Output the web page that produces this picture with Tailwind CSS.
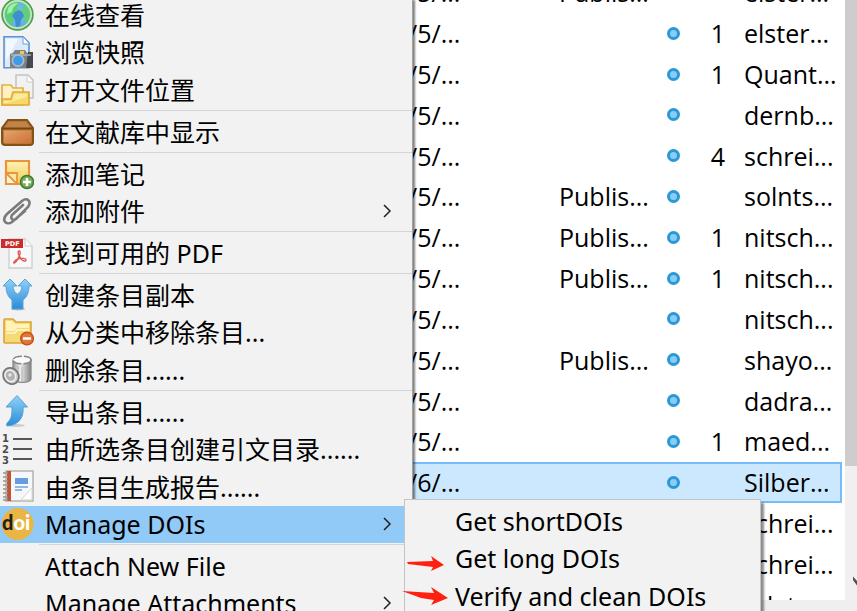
<!DOCTYPE html>
<html lang="zh-CN">
<head>
<meta charset="utf-8">
<meta name="viewport" content="width=device-width, initial-scale=1">
<title>Zotero</title>
<script src="https://cdn.jsdelivr.net/npm/@tailwindcss/browser@4"></script>
</head>
<body class="relative h-screen overflow-hidden bg-white font-['Open_Sans','Noto_Sans_CJK_SC',sans-serif] text-[25px] leading-8 text-black">

<!-- Item list -->
<main class="flex h-full flex-col">
  <div class="flex min-h-0 flex-1">
    <div class="min-w-0 flex-1 overflow-hidden pr-[3px]">
      <table class="-mt-[28px] h-[653px] w-full table-fixed border-collapse whitespace-nowrap" aria-label="Items">
        <colgroup><col class="w-[551px]"><col class="w-[103px]"><col class="w-[38px]"><col class="w-[44px]"><col></colgroup>
        <tbody id="items"></tbody>
      </table>
    </div>
    <div class="flex w-3 flex-col bg-[#f0f0f0]" aria-hidden="true">
      <div class="h-[466px] bg-[#cdcdcd]"></div>
      <svg class="mt-[109px] ml-auto h-3 w-1" viewBox="0 0 4 12"><path d="M0 1.5 4 6v4.5L0 5z" fill="#505050"/></svg>
    </div>
  </div>
  <footer class="h-[11px] bg-[#efefef]"></footer>
</main>

<!-- Context menu -->
<nav id="menu" aria-label="Item actions" class="absolute top-0 left-0 h-full w-[413px] overflow-hidden border-r border-[#a0a0a0] bg-[#f2f2f2] font-['Noto_Sans','Noto_Sans_CJK_SC',sans-serif] shadow-[2px_0_2px_rgba(0,0,0,0.5)]">
  <div class="-mt-1">
    <div class="grid h-[113px] auto-rows-fr">
      <button class="flex w-full items-center text-left">
        <svg class="mr-[11px] ml-px size-[33px] shrink-0" viewBox="0 0 33 33"><defs><radialGradient id="gl" cx=".5" cy=".45" r=".6"><stop offset="0" stop-color="#7cc4ee"/><stop offset="1" stop-color="#5aa5dd"/></radialGradient></defs><circle cx="16.500" cy="16.500" r="15.300" fill="url(#gl)" stroke="#4e9f4a" stroke-width="1.800"/><path d="M5 10C8 4 14 3 18 4l-2 5 2 3-4 3-3 3 2 4-2 5C5 24 3 17 5 10z" fill="#58cf74"/><path d="M20 4c7 2 10 8 9 15l-4 6-3-3 1-5-5-2 1-3 5-2z" fill="#5fcf7c"/><path d="M18 12l3 2 2 4-3 4-1 6-4 1-1-7-3-4 3-4z" fill="#3f8ed0"/><path d="M7 10c3-4 6-5 10-5l-5 5-1 4-5 2z" fill="#a2ecae"/><circle cx="16.500" cy="16.500" r="13.600" fill="none" stroke="#c5e8b4" stroke-width="1.800"/></svg>在线查看</button>
      <button class="flex w-full items-center text-left">
        <svg class="mr-[11px] ml-px size-[33px] shrink-0" viewBox="0 0 33 33"><path d="M3 .8h19l6 6v25H3z" fill="#dceafc" stroke="#5a92d4" stroke-width="1.600"/><path d="M5 3h12L5 25z" fill="#fff" opacity=".65"/><path d="M22 1v7h6" fill="#fff" stroke="#6f9fd9"/><path d="M9 18l3-1 2-3h10l2 3h5v15H9z" fill="#7b8287"/><path d="M27 16h5v16h-7z" fill="#464a4f"/><path d="M19 15h4v3h-4z" fill="#f5c84d"/><path d="M10 19h20" stroke="#aab2b8" stroke-width="1.500"/><circle cx="17" cy="24.500" r="6.500" fill="#b0bcc5"/><circle cx="17" cy="24.500" r="4.800" fill="#3d9cea"/></svg>浏览快照</button>
      <button class="flex w-full items-center text-left">
        <svg class="mr-[11px] ml-px size-[33px] shrink-0" viewBox="0 0 33 33"><path d="M15 1h12l5 5v18H15z" fill="#f2f2f2" stroke="#c2c2c2" stroke-width="1.500"/><path d="M26 1v7h6" fill="#fff" stroke="#ccc"/><path d="M1 11h9l2 3h10v17H1z" fill="#fff0c0" stroke="#e0b04a" stroke-width="1.700"/><path d="M12 18h16v13H1v-6h9z" fill="#f6d968" stroke="#e0ab3c" stroke-width="1.700"/><path d="M13 20h13v3L6 29H3v-2h8z" fill="#fff6bd" opacity=".6"/></svg>打开文件位置</button>
    </div>
    <hr class="mt-px mb-[2px] ml-[39px] border-[#d5d5d5]">
    <div class="grid h-[38px] auto-rows-fr">
      <button class="flex w-full items-center text-left">
        <svg class="mr-[11px] ml-px size-[33px] shrink-0" viewBox="0 0 33 33"><defs><linearGradient id="bx" x2="1" y2="1"><stop stop-color="#e5a468"/><stop offset="1" stop-color="#cc7038"/></linearGradient></defs><path d="M7 4h19l6 8v14q0 3-3 3H4q-3 0-3-3V12z" fill="#b87838" stroke="#845116" stroke-width="2"/><path d="M8 6h17l4 6H4z" fill="#c08348"/><path d="M2 12.500h29" stroke="#76460f" stroke-width="2"/><path d="M3 14.500h27V27H3z" fill="url(#bx)"/></svg>在文献库中显示</button>
    </div>
    <hr class="mt-px mb-[2px] ml-[39px] border-[#d5d5d5]">
    <div class="grid h-[75px] auto-rows-fr">
      <button class="flex w-full items-center text-left">
        <svg class="mr-[11px] ml-px size-[33px] shrink-0" viewBox="0 0 33 33"><defs><linearGradient id="nt" y2="1" x2="0"><stop stop-color="#fff1b5"/><stop offset="1" stop-color="#f0cc50"/></linearGradient></defs><path d="M5 4h23v23H5z" fill="url(#nt)" stroke="#e8953c" stroke-width="2.200"/><path d="M5 16h11v11H5z" fill="#fbe4a5" stroke="#e8953c" stroke-width="1.800"/><path d="M6 17l9 9H6z" fill="#fff6dc"/><path d="M5 16l11 11" stroke="#e8953c" stroke-width="1.800"/><circle cx="26" cy="25" r="6.500" fill="#76ad56" stroke="#457a33" stroke-width="1.500"/><path d="M26 21v8m-4-4h8" stroke="#fff" stroke-width="2.500"/></svg>添加笔记</button>
      <button class="flex w-full items-center text-left">
        <svg class="mr-[11px] ml-px size-[33px] shrink-0" viewBox="0 0 33 33" fill="none" stroke-linecap="round"><path d="M22 10 11 20c-2 4 1 6 4 4L27 12c4-6-1-10-6-6L6 19c-6 6-1 12 5 8l13-11" stroke="#7a7a7a" stroke-width="2.600"/></svg>添加附件<svg class="mr-[19px] ml-auto h-4 w-3 shrink-0" viewBox="0 0 12 16"><path d="m3 2 6 6-6 6" fill="none" stroke="#222" stroke-width="1.500"/></svg></button>
    </div>
    <hr class="mt-px mb-[2px] ml-[39px] border-[#d5d5d5]">
    <div class="grid h-[38px] auto-rows-fr">
      <button class="flex w-full items-center text-left">
        <svg class="mr-[11px] ml-px size-[33px] shrink-0" viewBox="0 0 33 33"><path d="M8 2h16l7 7v22H8z" fill="#f9f9f9" stroke="#cdcdcd" stroke-width="1.300"/><path d="M24 2v7h7" fill="#fff" stroke="#ccc"/><path d="M0 2h22v9H0z" fill="#cb2e2a"/><text x="4" y="9" font-family="DejaVu Sans" font-size="6.500" font-weight="700" fill="#fff">PDF</text><path d="M18 14c-2 1 0 5 2 8 2 2 5 3 5 1s-5-2-8-1c-3 1-5 4-4 4 2 0 5-6 6-9 .500-2 0-3-1-3z" fill="none" stroke="#dc5a55" stroke-width="1.400"/></svg>找到可用的 PDF</button>
    </div>
    <hr class="mt-px mb-[2px] ml-[39px] border-[#d5d5d5]">
    <div class="grid h-[113px] auto-rows-fr">
      <button class="flex w-full items-center text-left">
        <svg class="mr-[11px] ml-px size-[33px] shrink-0" viewBox="0 0 33 33"><defs><linearGradient id="bl" x2="0" y2="1"><stop stop-color="#8fd2f8"/><stop offset="1" stop-color="#2b8cd8"/></linearGradient></defs><ellipse cx="17" cy="31" rx="7" ry="1.500" fill="#bbb"/><path d="M9 1l7 7h-4c0 4 2 7 4.500 8C19 15 21 12 21 8h-4l7-7 7 7h-3c0 6-2 11-6 14v9H11v-9C7 19 5 14 5 8H2z" fill="url(#bl)" stroke="#56a5da" stroke-width="1"/></svg>创建条目副本</button>
      <button class="flex w-full items-center text-left">
        <svg class="mr-[11px] ml-px size-[33px] shrink-0" viewBox="0 0 33 33"><path d="M3 4q0-1 1-1h8l3 3h15v20q0 1-1 1H4q-1 0-1-1z" fill="#f6da78" stroke="#dba432" stroke-width="1.600"/><path d="M5 5h6l3 3h14v4H16l-3 3H5z" fill="#fff3b9"/><path d="M5 17h9l2-3h12" fill="none" stroke="#fff7ca" stroke-width="1.500"/><circle cx="26" cy="22.500" r="6.300" fill="#e2763a" stroke="#c2531c" stroke-width="1.500"/><path d="M22 22.500h8" stroke="#fff" stroke-width="2.500"/></svg>从分类中移除条目...</button>
      <button class="flex w-full items-center text-left">
        <svg class="mr-[11px] ml-px size-[33px] shrink-0" viewBox="0 0 33 33"><defs><linearGradient id="tr"><stop stop-color="#999"/><stop offset=".4" stop-color="#f0f0f0"/><stop offset="1" stop-color="#808080"/></linearGradient></defs><path d="M12 6v19c2 4 16 5 18 0V6z" fill="url(#tr)" stroke="#888" stroke-width="1.300"/><path d="M17 12v14m4-13v15m4-15v14" stroke="#b5b5b5"/><ellipse cx="21" cy="6" rx="9" ry="3.800" fill="#fafafa" stroke="#858585" stroke-width="1.600" stroke-dasharray="9 2"/><ellipse cx="10" cy="22" rx="7.500" ry="8.500" fill="#d0d0d0" stroke="#777" stroke-width="1.800" transform="rotate(-35 10 22)"/><ellipse cx="9.500" cy="21.500" rx="5" ry="5.800" fill="#b0b0b0" stroke="#f2f2f2" stroke-width="1.300" transform="rotate(-35 10 22)"/><circle cx="9" cy="21" r="1.800" fill="#e5e5e5"/></svg>删除条目......</button>
    </div>
    <hr class="mt-px mb-[2px] ml-[39px] border-[#d5d5d5]">
    <div class="grid h-[150px] auto-rows-fr">
      <button class="flex w-full items-center text-left">
        <svg class="mr-[11px] ml-px size-[33px] shrink-0" viewBox="0 0 33 33"><ellipse cx="15" cy="30.500" rx="9" ry="1.500" fill="#ccc"/><path d="M16 .5 26.500 12H22c1 9-3 18-16 19-1-2 0-3 1-4 4-4 4-8 4-15H5z" fill="url(#bl)" stroke="#56a0d8" stroke-width="1"/></svg>导出条目......</button>
      <button class="flex w-full items-center text-left">
        <svg class="mr-[11px] ml-px size-[33px] shrink-0" viewBox="0 0 33 33"><path d="M12 6h19M12 16h19M12 26h19" stroke="#555" stroke-width="2"/><g font-family="DejaVu Sans" font-size="10" font-weight="700" fill="#4a4a4a"><text x="1" y="9">1</text><text x="1" y="20">2</text><text x="1" y="31">3</text></g></svg>由所选条目创建引文目录......</button>
      <button class="flex w-full items-center text-left">
        <svg class="mr-[11px] ml-px size-[33px] shrink-0" viewBox="0 0 33 33"><path d="M5 1h27v30H5z" fill="#f5f7fa" stroke="#b3b3b3" stroke-width="1.500"/><path d="M6 1h4v30H6z" fill="#c2552f"/><path d="M2 3h5M2 7h5M2 11h5M2 15h5M2 19h5M2 23h5M2 27h5M2 30h5" stroke="#969696" stroke-width="1.500"/><path d="M14 8h13v6H14z" fill="#669ce0"/><path d="M14 17h13M14 20h7" stroke="#73a1dd" stroke-width="1.700"/><path d="M20 30 31 18v12z" fill="#fff" stroke="#d5d5d5"/></svg>由条目生成报告......</button>
      <button class="flex w-full items-center bg-[#91c9f7] text-left" aria-haspopup="menu" aria-expanded="true">
        <svg class="mr-[11px] ml-px size-[33px] shrink-0" viewBox="0 0 33 33"><circle cx="16.500" cy="16" r="16" fill="#ebb544"/><text x="1" y="21.500" font-family="Lato" font-size="20" font-weight="900" fill="#231f20">d<tspan fill="#fff">oi</tspan></text></svg>Manage DOIs<svg class="mr-[19px] ml-auto h-4 w-3 shrink-0" viewBox="0 0 12 16"><path d="m3 2 6 6-6 6" fill="none" stroke="#222" stroke-width="1.500"/></svg></button>
    </div>
    <hr class="mt-px mb-[2px] ml-[39px] border-[#d5d5d5]">
    <div class="grid h-[75px] auto-rows-fr">
      <button class="flex w-full items-center pl-[45px] text-left">Attach New File</button>
      <button class="flex w-full items-center pl-[45px] text-left">Manage Attachments<svg class="mr-[19px] ml-auto h-4 w-3 shrink-0" viewBox="0 0 12 16"><path d="m3 2 6 6-6 6" fill="none" stroke="#222" stroke-width="1.500"/></svg></button>
    </div>
  </div>
</nav>

<!-- Manage DOIs submenu -->
<nav aria-label="Manage DOIs" class="absolute top-[499px] left-[404px] w-[357px] border border-[#c4c4c4] bg-[#f2f2f2] pt-[2px] font-['Noto_Sans',sans-serif] shadow-[3px_4px_2px_rgba(0,0,0,0.45)]">
  <div class="grid h-[113px] auto-rows-fr">
    <button class="flex items-center pl-[50px] text-left">Get shortDOIs</button>
    <button class="flex items-center pl-[50px] text-left">Get long DOIs</button>
    <button class="flex items-center pl-[50px] text-left">Verify and clean DOIs</button>
  </div>
</nav>

<!-- Annotation arrows -->
<svg class="pointer-events-none absolute top-[555px] left-[402px] h-[52px] w-[48px]" viewBox="0 0 48 52" fill="#ff2010" aria-hidden="true">
  <path d="M5 7 31 6 29 1 42 10 29 16 31 12 6 9z"/>
  <path d="M0 36 32 38 29 32 46 43 29 50 32 45 19 43z"/>
</svg>

<script>
const rows = [
  ['/5/...', 'Publis...', '', 'elster...'],
  ['/5/...', '', '1', 'elster...'],
  ['/5/...', '', '1', 'Quant...'],
  ['/5/...', '', '', 'dernb...'],
  ['/5/...', '', '4', 'schrei...'],
  ['/5/...', 'Publis...', '', 'solnts...'],
  ['/5/...', 'Publis...', '1', 'nitsch...'],
  ['/5/...', 'Publis...', '1', 'nitsch...'],
  ['/5/...', '', '', 'nitsch...'],
  ['/5/...', 'Publis...', '', 'shayo...'],
  ['/5/...', '', '', 'dadra...'],
  ['/5/...', '', '1', 'maed...'],
  ['/6/...', '', '', 'Silber...'],
  ['/6/...', '', '', 'schrei...'],
  ['/6/...', '', '', 'schrei...'],
  ['/6/...', '', '', 'adatom...']
];
document.getElementById('items').innerHTML = rows.map(([date, pub, count, author], i) => `
  <tr class="${i === 12 ? 'bg-[#cce8ff] outline outline-2 -outline-offset-2 outline-[#74bdfa]' : ''}">
    <td class="p-0 pl-[408px]">${date}</td>
    <td class="p-0 pl-2">${pub}</td>
    <td class="p-0"><span class="mx-auto block size-[13px] rounded-full border-[3px] border-[#2a98d4] bg-[#8accf8]"></span></td>
    <td class="p-0 pl-2 text-center">${count}</td>
    <td class="p-0 pl-2">${author}</td>
  </tr>`).join('');
</script>
</body>
</html>
